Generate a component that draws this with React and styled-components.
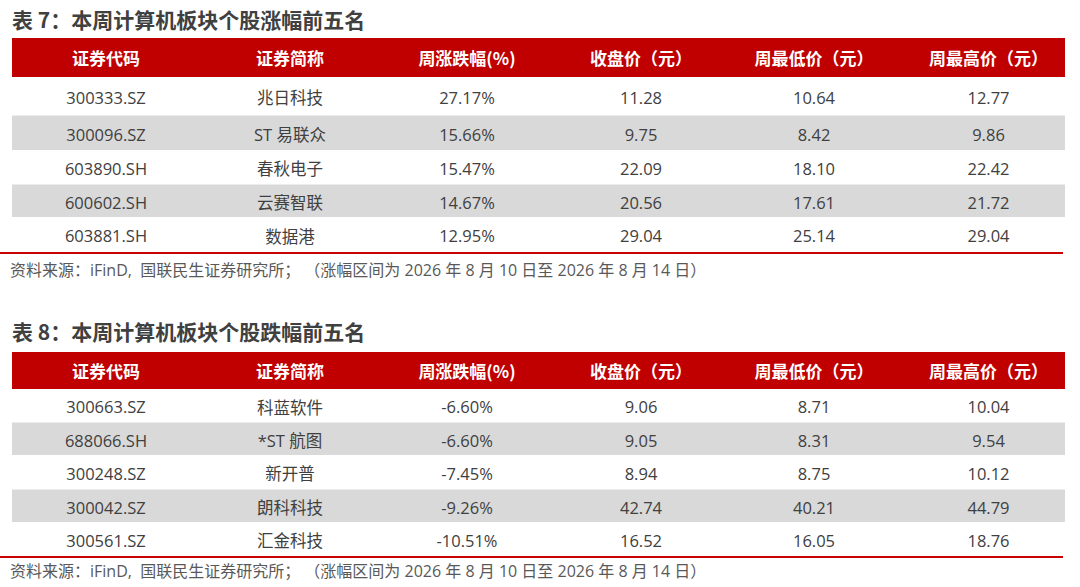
import React from "react";
import styled, { createGlobalStyle } from "styled-components";

const Global = createGlobalStyle`
  html, body { margin: 0; padding: 0; background: #ffffff; }
  body { font-family: "Open Sans", "Noto Sans CJK SC", sans-serif; }
`;

const COLS = "188px 180px 174px 174px 172px 165px";

const Page = styled.div`
  width: 1080px;
  height: 587px;
  overflow: hidden;
  display: flex;
  flex-direction: column;
`;

const Section = styled.section`
  display: flex;
  flex-direction: column;
  margin-top: ${(p) => p.$top}px;
`;

const Title = styled.h2`
  margin: 0;
  height: ${(p) => p.$h}px;
  padding-left: 12px;
  display: flex;
  align-items: center;
  font-family: "Noto Sans CJK SC", sans-serif;
  font-size: 21px;
  font-weight: 700;
  color: #404040;
  white-space: pre;
`;

const Table = styled.div`
  margin-left: 12px;
  width: 1053px;
  display: flex;
  flex-direction: column;
`;

const Row = styled.div`
  display: grid;
  grid-template-columns: ${COLS};
  height: ${(p) => p.$h}px;
  align-items: center;
  background: ${(p) => (p.$head ? "#c00000" : p.$shade ? "#d9d9d9" : "#ffffff")};
  border-top: ${(p) => (p.$shade ? "1px solid #ececec" : "none")};
  box-sizing: border-box;
`;

const HeadCell = styled.div`
  text-align: center;
  color: #ffffff;
  font-family: "Noto Sans CJK SC", sans-serif;
  font-weight: 700;
  font-size: 17px;
  padding-left: ${(p) => p.$shift || 0}px;
`;

const Cell = styled.div`
  text-align: center;
  color: #404040;
  font-size: 16.5px;
  padding-top: 2px;
  padding-left: ${(p) => p.$shift || 0}px;
`;

const Rule = styled.div`
  width: 1063px;
  height: 2px;
  background: #c80000;
`;

const Source = styled.p`
  margin: 0;
  height: ${(p) => p.$h}px;
  line-height: ${(p) => p.$h}px;
  padding-left: 10px;
  font-size: 16px;
  color: #595959;
  white-space: pre;
`;

const HEAD = ["证券代码", "证券简称", "周涨跌幅(%)", "收盘价（元）", "周最低价（元）", "周最高价（元）"];
const SHIFTS = [0, 0, 0, 0, 0, 12];

const DATA = [
  {
    title: "表 7：本周计算机板块个股涨幅前五名",
    top: 0,
    titleH: 38,
    headH: 39,
    rowH: [38, 35, 34, 33, 35],
    srcH: 32,
    rows: [
      ["300333.SZ", "兆日科技", "27.17%", "11.28", "10.64", "12.77"],
      ["300096.SZ", "ST 易联众", "15.66%", "9.75", "8.42", "9.86"],
      ["603890.SH", "春秋电子", "15.47%", "22.09", "18.10", "22.42"],
      ["600602.SH", "云赛智联", "14.67%", "20.56", "17.61", "21.72"],
      ["603881.SH", "数据港", "12.95%", "29.04", "25.14", "29.04"],
    ],
  },
  {
    title: "表 8：本周计算机板块个股跌幅前五名",
    top: 24,
    titleH: 42,
    headH: 37,
    rowH: [33, 33, 34, 33, 34],
    srcH: 26,
    rows: [
      ["300663.SZ", "科蓝软件", "-6.60%", "9.06", "8.71", "10.04"],
      ["688066.SH", "*ST 航图", "-6.60%", "9.05", "8.31", "9.54"],
      ["300248.SZ", "新开普", "-7.45%", "8.94", "8.75", "10.12"],
      ["300042.SZ", "朗科科技", "-9.26%", "42.74", "40.21", "44.79"],
      ["300561.SZ", "汇金科技", "-10.51%", "16.52", "16.05", "18.76"],
    ],
  },
];

const SOURCE = "资料来源：iFinD,  国联民生证券研究所； （涨幅区间为 2026 年 8 月 10 日至 2026 年 8 月 14 日）";

export default function App() {
  return (
    <Page>
      <Global />
      {DATA.map((s) => (
        <Section key={s.title} $top={s.top}>
          <Title $h={s.titleH}>{s.title}</Title>
          <Table>
            <Row $head $h={s.headH}>
              {HEAD.map((h, i) => (
                <HeadCell key={h} $shift={SHIFTS[i]}>{h}</HeadCell>
              ))}
            </Row>
            {s.rows.map((r, ri) => (
              <Row key={r[0]} $h={s.rowH[ri]} $shade={ri % 2 === 1}>
                {r.map((c, ci) => (
                  <Cell key={ci} $shift={SHIFTS[ci]}>{c}</Cell>
                ))}
              </Row>
            ))}
          </Table>
          <Rule />
          <Source $h={s.srcH}>{SOURCE}</Source>
        </Section>
      ))}
    </Page>
  );
}
